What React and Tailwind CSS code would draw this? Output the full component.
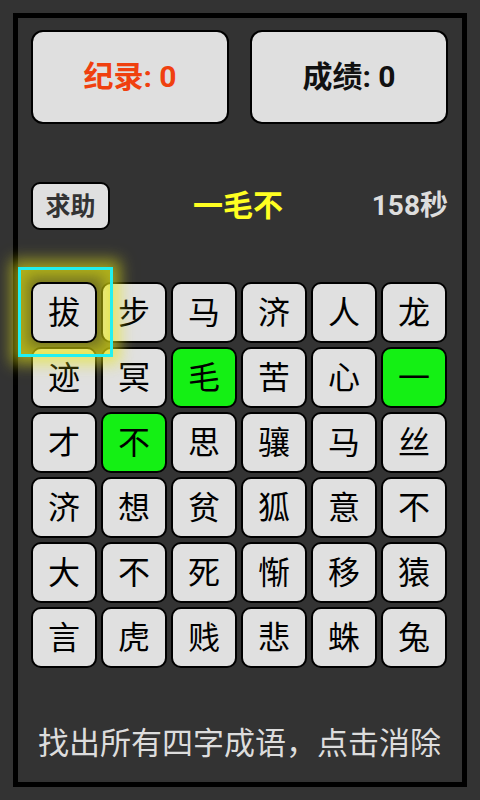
import React from "react";

const rows = [
  ["拔", "步", "马", "济", "人", "龙"],
  ["迹", "冥", "毛", "苦", "心", "一"],
  ["才", "不", "思", "骧", "马", "丝"],
  ["济", "想", "贫", "狐", "意", "不"],
  ["大", "不", "死", "惭", "移", "猿"],
  ["言", "虎", "贱", "悲", "蛛", "兔"],
];
const green = new Set(["1-2", "1-5", "2-1"]);

const font = { fontFamily: 'Roboto, "Noto Sans CJK SC", "Noto Sans", sans-serif' };

export default function App() {
  return (
    <div className="w-[480px] h-[800px] bg-[#333333] p-[13px]" style={font}>
      <div className="relative h-full border-[5px] border-black bg-[#333333] flex flex-col pl-[13px] pr-[14px] pt-[12px]">
        <div className="flex gap-[21px]">
          <div className="w-[198px] h-[94px] rounded-[12px] border-2 border-black bg-[#dfdfdf] flex items-center justify-center text-[30px] font-bold text-[#f0400f] leading-none">
            纪录: 0
          </div>
          <div className="w-[198px] h-[94px] rounded-[12px] border-2 border-black bg-[#dfdfdf] flex items-center justify-center text-[30px] font-bold text-[#111] leading-none">
            成绩: 0
          </div>
        </div>
        <div className="mt-[58px] h-[48px] flex items-center justify-between">
          <div className="w-[79px] h-[48px] rounded-[9px] border-2 border-black bg-[#dfdfdf] flex items-center justify-center text-[25px] font-bold text-[#333] leading-none">
            求助
          </div>
          <div className="text-[30px] font-bold text-[#ffff22] leading-none pl-[8px]">一毛不</div>
          <div className="w-[90px] text-right text-[28px] font-bold text-[#dddddd] leading-none">158秒</div>
        </div>
        <div className="mt-[52px] grid grid-cols-6 gap-x-[4px] gap-y-[4px] w-[416px]">
          {rows.map((r, i) =>
            r.map((c, j) => {
              const g = green.has(`${i}-${j}`);
              const sel = i === 0 && j === 0;
              return (
                <div
                  key={`${i}-${j}`}
                  className={`${sel ? "relative z-20" : ""} h-[61px] rounded-[10px] border-2 border-black flex items-center justify-center text-[32px] text-black leading-none ${
                    g ? "bg-[#14f014]" : "bg-[#e0e0e0]"
                  }`}
                >
                  {c}
                </div>
              );
            })
          )}
        </div>
        <div className="absolute z-10 left-0 top-[249px] w-[95px] h-[90px] border-[3px] border-[#22f0f0] bg-[#ffff00]/30 shadow-[0_0_14px_7px_rgba(230,230,20,0.6),inset_0_0_14px_7px_rgba(230,230,20,0.55)]" />
        <div className="mt-auto mb-[23px] text-center text-[31px] text-[#dddddd] leading-none whitespace-nowrap">
          找出所有四字成语，点击消除
        </div>
      </div>
    </div>
  );
}
